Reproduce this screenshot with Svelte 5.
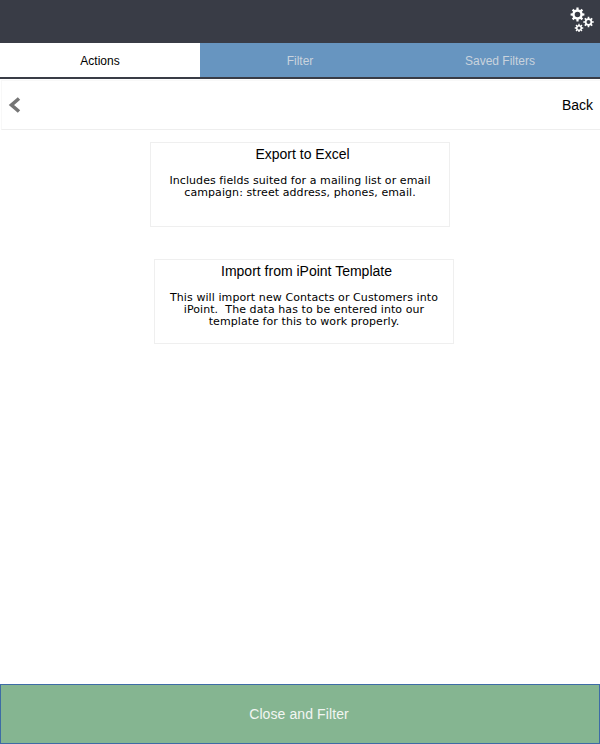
<script>
  const tabs = [
    { label: 'Actions', active: true },
    { label: 'Filter', active: false },
    { label: 'Saved Filters', active: false }
  ];

  // builds a toothed gear outline with a round hole
  function gear(cx, cy, outer, inner, hole, teeth) {
    let d = '';
    const step = (Math.PI * 2) / teeth;
    for (let i = 0; i < teeth; i++) {
      const a = i * step;
      const pts = [
        [inner, a - step * 0.5],
        [inner, a - step * 0.28],
        [outer, a - step * 0.2],
        [outer, a + step * 0.2],
        [inner, a + step * 0.28]
      ];
      for (const [r, t] of pts) {
        const x = (cx + r * Math.cos(t)).toFixed(2);
        const y = (cy + r * Math.sin(t)).toFixed(2);
        d += `${d ? 'L' : 'M'}${x} ${y}`;
      }
    }
    d += `Z M${cx - hole} ${cy}a${hole} ${hole} 0 1 0 ${hole * 2} 0a${hole} ${hole} 0 1 0 ${-hole * 2} 0Z`;
    return d;
  }
</script>

<div class="page">
  <header class="topbar">
    <svg class="gears" width="26" height="26" viewBox="0 0 26 26" aria-hidden="true">
      <path fill-rule="evenodd" d={gear(9.5, 8.5, 7, 5.2, 2.8, 8)} />
      <path fill-rule="evenodd" d={gear(20.5, 16, 5.3, 3.8, 2, 8)} />
      <path fill-rule="evenodd" d={gear(11, 22, 4.3, 3.1, 1.5, 8)} />
    </svg>
  </header>

  <nav class="tabs">
    {#each tabs as tab}
      <div class="tab" class:active={tab.active}>{tab.label}</div>
    {/each}
  </nav>

  <div class="backbar">
    <svg width="14" height="16" viewBox="0 0 14 16" aria-hidden="true">
      <path d="M12 1.5 L4.5 8 L12 14.5" fill="none" stroke="#757575" stroke-width="3.6" />
    </svg>
    <span class="back">Back</span>
  </div>

  <main class="content">
    <section class="card first">
      <h3>Export to Excel</h3>
      <p>Includes fields suited for a mailing list or email<br />campaign: street address, phones, email.</p>
    </section>

    <section class="card second">
      <h3>Import from iPoint Template</h3>
      <p>This will import new Contacts or Customers into<br />iPoint.&nbsp; The data has to be entered into our<br />template for this to work properly.</p>
    </section>
  </main>

  <button class="close">Close and Filter</button>
</div>

<style>
  :global(body) {
    background: #fff;
  }

  .page {
    width: 600px;
    height: 744px;
    display: flex;
    flex-direction: column;
    font-family: "Liberation Sans", Arial, sans-serif;
    overflow: hidden;
  }

  .topbar {
    height: 43px;
    flex: none;
    background: #393c46;
    display: flex;
    justify-content: flex-end;
    align-items: flex-start;
    padding: 6px 6px 0 0;
    box-sizing: border-box;
  }

  .gears {
    fill: #fff;
  }

  .tabs {
    height: 36px;
    flex: none;
    display: grid;
    grid-template-columns: 200px 200px 200px;
    background: #6795c0;
    border-bottom: 2px solid #393c46;
    box-sizing: border-box;
  }

  .tab {
    display: flex;
    align-items: center;
    justify-content: center;
    padding-top: 2px;
    font-size: 12px;
    color: #c9d3dd;
  }

  .tab.active {
    background: #fff;
    color: #000;
  }

  .backbar {
    height: 50px;
    flex: none;
    margin: 1px 0 0 1px;
    border-top: 1px solid #f8f8f8;
    border-bottom: 1px solid #eee;
    border-left: 1px solid #f8f8f8;
    box-sizing: border-box;
    display: flex;
    align-items: center;
    justify-content: space-between;
    padding: 0 7px 0 5px;
  }

  .back {
    font-size: 14px;
    color: #000;
  }

  .content {
    flex: 1;
    display: flex;
    flex-direction: column;
    padding-top: 12px;
  }

  .card {
    width: 300px;
    height: 85px;
    box-sizing: border-box;
    border: 1px solid #efefef;
    text-align: center;
  }

  .first {
    margin-left: 150px;
  }

  .second {
    margin: 32px 0 0 154px;
  }

  h3 {
    margin: 3px 0 0;
    padding-left: 5px;
    font-size: 14px;
    line-height: 16px;
    font-weight: 400;
    color: #000;
  }

  p {
    margin: 13px 0 0;
    font-family: "DejaVu Sans", Verdana, sans-serif;
    font-size: 11px;
    letter-spacing: 0.08px;
    line-height: 12px;
    color: #000;
  }

  .close {
    height: 60px;
    flex: none;
    width: 100%;
    box-sizing: border-box;
    background: #85b591;
    border: 1px solid #3e6ca5;
    color: #f2f6f3;
    font-family: inherit;
    font-size: 14px;
    letter-spacing: 0.1px;
    padding: 0 2px 0 0;
  }
</style>
